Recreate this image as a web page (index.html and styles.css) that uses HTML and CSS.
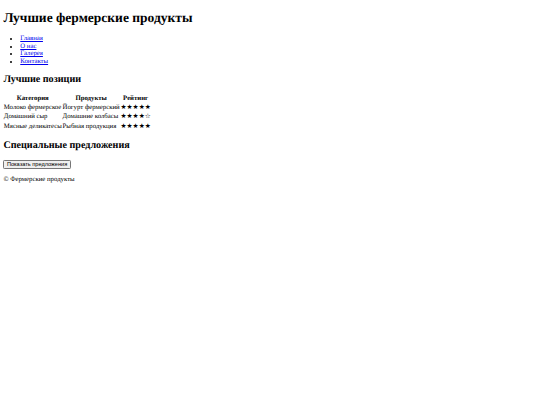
FILE: index.html
```html
<!DOCTYPE html>
<html lang="ru">
<head>
<meta charset="utf-8">
<title>Лучшие фермерские продукты</title>
<link rel="stylesheet" href="styles.css">
</head>
<body class="page">
<header>
<h1 class="title">Лучшие фермерские продукты</h1>
<nav>
<ul class="nav-list">
<li><a class="nav-link" href="#">Главная</a></li>
<li><a class="nav-link" href="#">О нас</a></li>
<li><a class="nav-link" href="#">Галерея</a></li>
<li><a class="nav-link" href="#">Контакты</a></li>
</ul>
</nav>
</header>
<main>
<section>
<h2 class="section-title">Лучшие позиции</h2>
<table class="top-table">
<thead>
<tr><th class="cell head">Категория</th><th class="cell head">Продукты</th><th class="cell head">Рейтинг</th></tr>
</thead>
<tbody>
<tr><td class="cell">Молоко фермерское</td><td class="cell">Йогурт фермерский</td><td class="cell stars">★★★★★</td></tr>
<tr><td class="cell">Домашний сыр</td><td class="cell">Домашние колбасы</td><td class="cell stars">★★★★☆</td></tr>
<tr><td class="cell">Мясные деликатесы</td><td class="cell">Рыбная продукция</td><td class="cell stars">★★★★★</td></tr>
</tbody>
</table>
</section>
<section>
<h2 class="section-title">Специальные предложения</h2>
<button class="offer-btn" type="button">Показать предложения</button>
</section>
</main>
<footer>
<p class="copy">© Фермерские продукты</p>
</footer>
</body>
</html>
```

FILE: styles.css
```css
html {
  background: #fff;
}
.page {
  margin: 3.375px;
  font-family: "Liberation Serif", "Times New Roman", serif;
  font-size: 6.75px;
  line-height: 7.76px;
  color: #000;
  text-rendering: geometricPrecision;
}
.title {
  font-size: 13.5px;
  line-height: 15.5px;
  margin: 7px 0 9.05px;
  font-weight: bold;
}
.nav-list {
  margin: 6.75px 0;
  padding-left: 16.875px;
  list-style: disc;
}
.nav-link {
  color: #0000ee;
  text-decoration: underline;
}
.section-title {
  font-size: 10.125px;
  line-height: 11.64px;
  margin: 8.4px 0;
  font-weight: bold;
}
.top-table {
  border-collapse: separate;
  border-spacing: 0.84px;
  font-size: 6.75px;
}
.cell {
  padding: 0.42px;
  line-height: 8.5px;
}
.head {
  font-weight: bold;
  text-align: center;
}
.offer-btn {
  font-family: "Liberation Sans", Arial, sans-serif;
  font-size: 5.625px;
  line-height: 6.5px;
  padding: 0.42px 2.53px;
  margin: 0;
  background: #efefef;
  color: #000;
  border: 0.42px solid #767676;
  border-radius: 1.3px;
}
.copy {
  margin: 6.75px 0;
}
```
